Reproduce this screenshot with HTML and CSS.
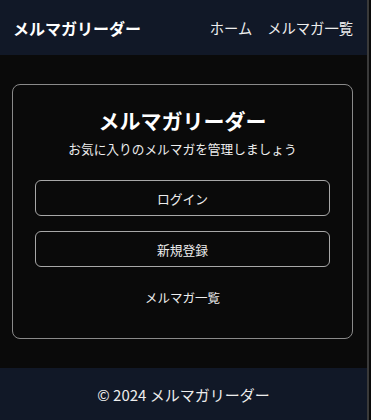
FILE: index.html
```html
<!DOCTYPE html>
<html lang="ja">
<head>
<meta charset="utf-8">
<title>メルマガリーダー</title>
<link rel="stylesheet" href="styles.css">
</head>
<body>
<div class="page">
  <header class="site-header">
    <a class="brand" href="#">メルマガリーダー</a>
    <nav class="nav">
      <a href="#">ホーム</a>
      <a href="#">メルマガ一覧</a>
    </nav>
  </header>
  <main class="main">
    <section class="card">
      <h1 class="card-title">メルマガリーダー</h1>
      <p class="card-sub">お気に入りのメルマガを管理しましょう</p>
      <div class="actions">
        <a class="btn" href="#">ログイン</a>
        <a class="btn" href="#">新規登録</a>
      </div>
      <a class="link" href="#">メルマガ一覧</a>
    </section>
  </main>
  <footer class="site-footer">© 2024 メルマガリーダー</footer>
</div>
</body>
</html>
```

FILE: styles.css
```css
* { box-sizing: border-box; }
html, body { margin: 0; padding: 0; }
body {
  background: #0a0a0a;
  color: #ededed;
  font-family: "Noto Sans CJK JP", "Noto Sans", sans-serif;
}
a { color: inherit; text-decoration: none; }
.page {
  width: 369px;
  min-height: 420px;
  display: flex;
  flex-direction: column;
  border-right: 2px solid #3a3a3a;
}
.site-header {
  height: 55px;
  background: #111827;
  display: flex;
  align-items: center;
  justify-content: space-between;
  padding: 0 14px 0 13px;
}
.brand {
  font-size: 16px;
  font-weight: 700;
  color: #fff;
}
.nav {
  display: flex;
  gap: 15px;
  font-size: 14.3px;
}
.main {
  flex: 1;
  padding: 29px 14px 29px 12px;
}
.card {
  border: 1px solid #8a8a8a;
  border-radius: 8px;
  padding: 20px 22px 30px;
  display: flex;
  flex-direction: column;
  align-items: center;
  height: 255px;
}
.card-title {
  margin: 0;
  font-size: 21px;
  line-height: 30px;
  font-weight: 700;
  color: #fff;
}
.card-sub {
  margin: 4px 0 0;
  font-size: 12.7px;
  line-height: 20px;
}
.actions {
  margin-top: 21px;
  width: 100%;
  display: flex;
  flex-direction: column;
  gap: 15px;
}
.btn {
  height: 36px;
  border: 1px solid #a8a8a8;
  border-radius: 6px;
  display: flex;
  align-items: center;
  justify-content: center;
  font-size: 12.8px;
}
.link {
  margin-top: 21px;
  font-size: 12.5px;
  line-height: 20px;
}
.site-footer {
  height: 52px;
  background: #111827;
  display: flex;
  align-items: center;
  justify-content: center;
  font-size: 15px;
}
```
